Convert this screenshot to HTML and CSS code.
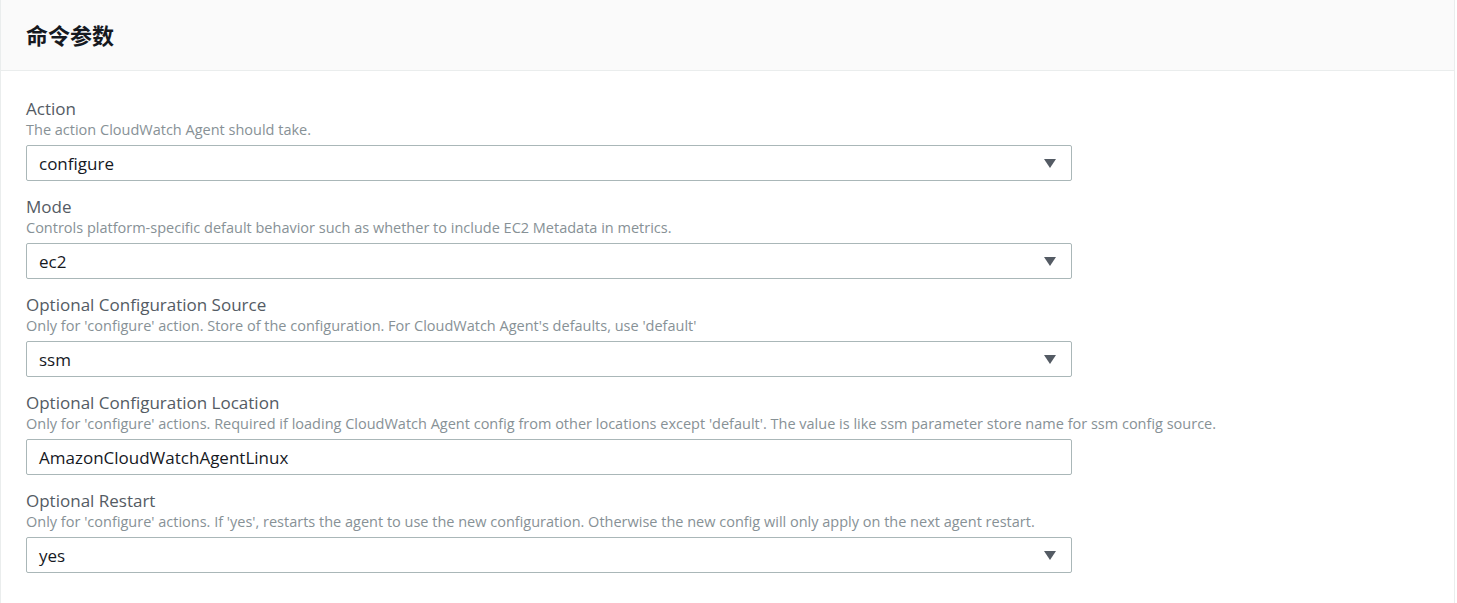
FILE: index.html
```html
<!DOCTYPE html>
<html lang="zh">
<head>
<meta charset="utf-8">
<title>命令参数</title>
<link rel="stylesheet" href="styles.css">
</head>
<body>
<section class="panel">
  <header class="panel-header">
    <h2 class="panel-title">命令参数</h2>
  </header>
  <div class="panel-body">
    <div class="field">
      <div class="field-label">Action</div>
      <div class="field-desc">The action CloudWatch Agent should take.</div>
      <div class="select">
        <span class="select-value">configure</span>
        <svg class="caret" width="12" height="9" viewBox="0 0 12 9"><path d="M0 0H12L6 9Z" fill="#545b64"/></svg>
      </div>
    </div>
    <div class="field">
      <div class="field-label">Mode</div>
      <div class="field-desc">Controls platform-specific default behavior such as whether to include EC2 Metadata in metrics.</div>
      <div class="select">
        <span class="select-value">ec2</span>
        <svg class="caret" width="12" height="9" viewBox="0 0 12 9"><path d="M0 0H12L6 9Z" fill="#545b64"/></svg>
      </div>
    </div>
    <div class="field">
      <div class="field-label">Optional Configuration Source</div>
      <div class="field-desc">Only for 'configure' action. Store of the configuration. For CloudWatch Agent's defaults, use 'default'</div>
      <div class="select">
        <span class="select-value">ssm</span>
        <svg class="caret" width="12" height="9" viewBox="0 0 12 9"><path d="M0 0H12L6 9Z" fill="#545b64"/></svg>
      </div>
    </div>
    <div class="field">
      <div class="field-label">Optional Configuration Location</div>
      <div class="field-desc">Only for 'configure' actions. Required if loading CloudWatch Agent config from other locations except 'default'. The value is like ssm parameter store name for ssm config source.</div>
      <div class="select">
        <span class="select-value">AmazonCloudWatchAgentLinux</span>
      </div>
    </div>
    <div class="field">
      <div class="field-label">Optional Restart</div>
      <div class="field-desc">Only for 'configure' actions. If 'yes', restarts the agent to use the new configuration. Otherwise the new config will only apply on the next agent restart.</div>
      <div class="select">
        <span class="select-value">yes</span>
        <svg class="caret" width="12" height="9" viewBox="0 0 12 9"><path d="M0 0H12L6 9Z" fill="#545b64"/></svg>
      </div>
    </div>
  </div>
</section>
</body>
</html>
```

FILE: styles.css
```css
html, body {
  margin: 0;
  padding: 0;
  background: #ffffff;
}
body {
  font-family: "Open Sans", "Noto Sans CJK SC", sans-serif;
  color: #16191f;
}
.panel {
  width: 1455px;
  box-sizing: border-box;
  border-left: 1px solid #eaeded;
  border-right: 1px solid #eaeded;
  min-height: 603px;
}
.panel-header {
  height: 71px;
  box-sizing: border-box;
  background: #fafafa;
  border-bottom: 1px solid #eaeded;
  padding: 0 25px;
  display: flex;
  align-items: center;
}
.panel-title {
  margin: 0;
  font-size: 22px;
  font-weight: 700;
  line-height: 28px;
  color: #16191f;
}
.panel-body {
  padding: 29px 25px 0;
  display: flex;
  flex-direction: column;
  gap: 17px;
}
.field {
  display: flex;
  flex-direction: column;
  width: 1046px;
}
.field-label {
  font-size: 17px;
  line-height: 18px;
  margin-bottom: 2px;
  color: #545b64;
}
.field-desc {
  font-size: 14.5px;
  line-height: 20px;
  color: #879196;
  white-space: nowrap;
}
.select {
  margin-top: 5px;
  height: 36px;
  box-sizing: border-box;
  border: 1px solid #aab7b8;
  border-radius: 2px;
  display: flex;
  align-items: center;
  justify-content: space-between;
  padding: 0 15px 0 12px;
}
.select-value {
  font-size: 17px;
  color: #16191f;
}
.caret {
  display: block;
}
```
